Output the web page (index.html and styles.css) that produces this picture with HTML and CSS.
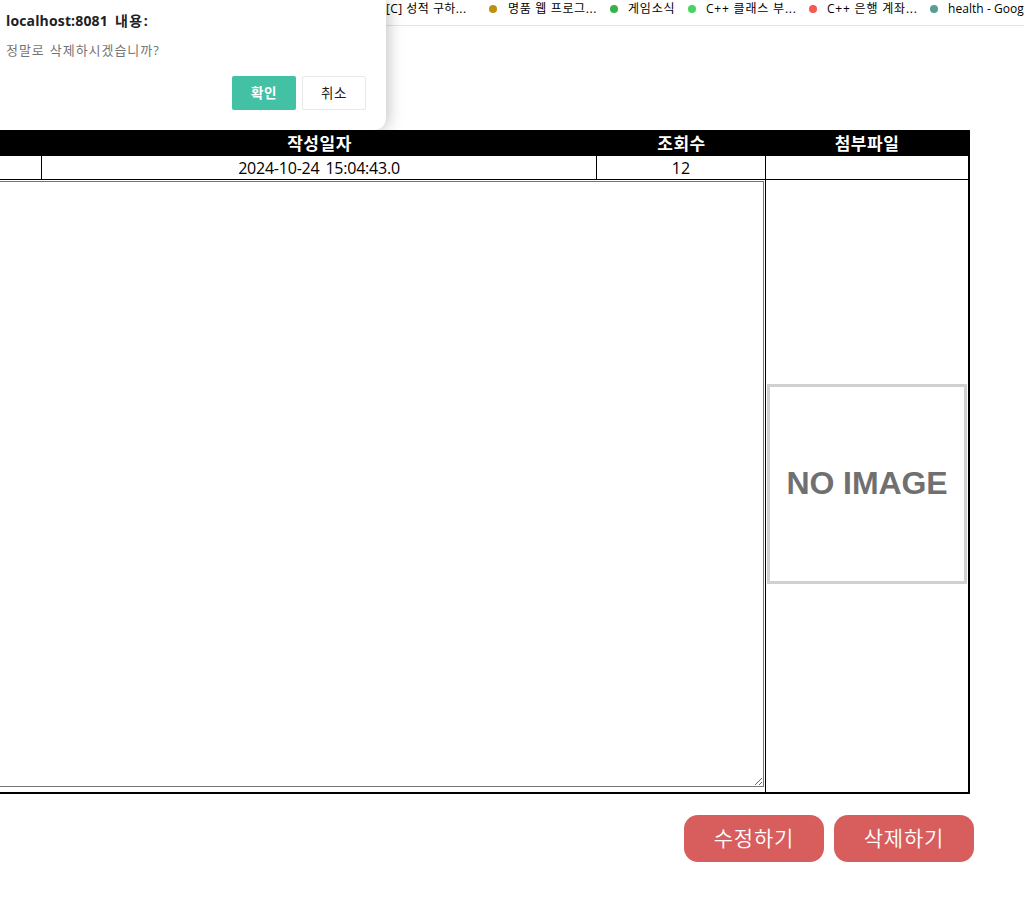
FILE: index.html
```html
<!DOCTYPE html>
<html lang="ko">
<head>
<meta charset="utf-8">
<title>게시글 보기</title>
<link rel="stylesheet" href="styles.css">
</head>
<body>
<nav class="bookmarks">
  <span class="bookmark first"><span class="label">[C] 성적 구하...</span></span>
  <span class="bookmark wide"><i class="dot gold"></i><span class="label second">명품 웹 프로그...</span></span>
  <span class="bookmark narrow"><i class="dot green"></i><span class="label loose">게임소식</span></span>
  <span class="bookmark wide"><i class="dot lime"></i><span class="label loose">C++ 클래스 부...</span></span>
  <span class="bookmark wide"><i class="dot red"></i><span class="label loose">C++ 은행 계좌...</span></span>
  <span class="bookmark"><i class="dot teal"></i><span class="latin">health - Goog</span></span>
</nav>
<main class="page">
  <section class="board">
    <div class="head"></div>
    <div class="head">작성일자</div>
    <div class="head">조회수</div>
    <div class="head">첨부파일</div>
    <div class="cell"></div>
    <div class="cell"><span class="date">2024-10-24 15:04:43.0</span></div>
    <div class="cell">12</div>
    <div class="cell last"></div>
    <div class="content"><textarea class="text"></textarea></div>
    <div class="attachment"><div class="no-image"><span>NO IMAGE</span></div></div>
  </section>
  <div class="actions">
    <button class="action">수정하기</button>
    <button class="action">삭제하기</button>
  </div>
</main>
<div class="dialog">
  <h1 class="dialog-title"><span class="host">localhost:8081</span><span class="says">내용:</span></h1>
  <p class="dialog-text">정말로 삭제하시겠습니까?</p>
  <div class="dialog-buttons">
    <button class="btn ok">확인</button>
    <button class="btn cancel">취소</button>
  </div>
</div>
</body>
</html>
```
FILE: styles.css
```css
* { box-sizing: border-box; }
body {
  margin: 0;
  height: 920px;
  overflow: hidden;
  position: relative;
  background: #fff;
  color: #000;
  font-family: "Open Sans", "Noto Sans CJK KR", sans-serif;
}
button { font-family: inherit; padding: 0; }
.bookmarks {
  display: flex;
  height: 26px;
  padding-left: 386px;
  border-bottom: 1px solid #e4e4e4;
  font-size: 12px;
  line-height: 17px;
  white-space: nowrap;
}
.bookmark { display: flex; flex: none; gap: 10px; height: 17px; }
.first { width: 103px; }
.wide { width: 121px; }
.narrow { width: 78px; }
.label { letter-spacing: .4px; word-spacing: .2px; }
.second { margin-left: 1px; letter-spacing: .6px; }
.loose { letter-spacing: .8px; word-spacing: 0; }
.latin { letter-spacing: .05px; }
.dot { width: 8px; height: 8px; margin-top: 5px; border-radius: 50%; }
.gold { background: #bd9012; }
.green { background: #37b24a; }
.lime { background: #47d65d; }
.red { background: #f55a4c; }
.teal { background: #559f93; }
.page { width: 974px; padding-top: 104px; }
.board {
  display: grid;
  grid-template-columns: 42px 555px 169px 202px;
  grid-template-rows: 24px 24px 612px;
  width: 970px;
  border: solid #000;
  border-width: 2px 2px 2px 0;
}
.head {
  background: #000;
  color: #fff;
  font-size: 17px;
  font-weight: 700;
  line-height: 24px;
  letter-spacing: .5px;
  text-align: center;
}
.cell {
  border-right: 1px solid #000;
  border-bottom: 1px solid #000;
  font-size: 16px;
  line-height: 24px;
  text-align: center;
}
.date { letter-spacing: -.22px; word-spacing: 2px; }
.cell.last { border-right: 0; }
.content {
  grid-column: 1 / 4;
  border-right: 1px solid #000;
  padding: 1px 1px 0 0;
  overflow: hidden;
}
.text {
  display: block;
  width: 776px;
  height: 606px;
  margin: 0 0 0 -12px;
  border: 1px solid #767676;
  border-radius: 0;
  background: #fff;
}
.attachment { display: flex; align-items: center; justify-content: center; padding-bottom: 4px; }
.no-image {
  display: flex;
  align-items: center;
  justify-content: center;
  width: 200px;
  height: 200px;
  padding-bottom: 3px;
  border: 3px solid #d0d0d0;
  color: #707070;
  font: 700 32px/40px "Liberation Sans", Arial, sans-serif;
  letter-spacing: -.1px;
  white-space: nowrap;
}
.actions { display: flex; justify-content: flex-end; gap: 10px; margin-top: 21px; }
.action {
  width: 140px;
  height: 47px;
  border: 0;
  border-radius: 14px;
  background: #d85d5d;
  color: #fff;
  font-size: 21px;
  font-weight: 350;
  line-height: 47px;
  letter-spacing: .8px;
}
.dialog {
  position: absolute;
  left: 0;
  top: 0;
  width: 386px;
  height: 130px;
  padding: 11px 20px 0 6px;
  border-radius: 0 0 12px 0;
  background: #fff;
  box-shadow: 2px 0 16px rgba(0, 0, 0, .25);
  clip-path: inset(0 -40px 0 0);
}
.dialog-title {
  display: flex;
  gap: 7px;
  margin: 0;
  font-size: 14px;
  line-height: 20px;
  color: #202124;
  white-space: nowrap;
}
.host { letter-spacing: .15px; }
.says { letter-spacing: 1.6px; }
.dialog-text { margin: 9px 0 0; font-size: 13px; line-height: 20px; color: #757575; letter-spacing: .95px; word-spacing: .8px; }
.dialog-buttons { display: flex; justify-content: flex-end; gap: 6px; margin-top: 16px; }
.btn { width: 64px; height: 34px; border-radius: 2px; font-size: 13.5px; line-height: 32px; letter-spacing: .5px; }
.ok { border: 0; background: #43c1a5; color: #fff; font-weight: 700; line-height: 34px; }
.cancel { border: 1px solid #e8e8e8; background: #fff; color: #202124; }
```
